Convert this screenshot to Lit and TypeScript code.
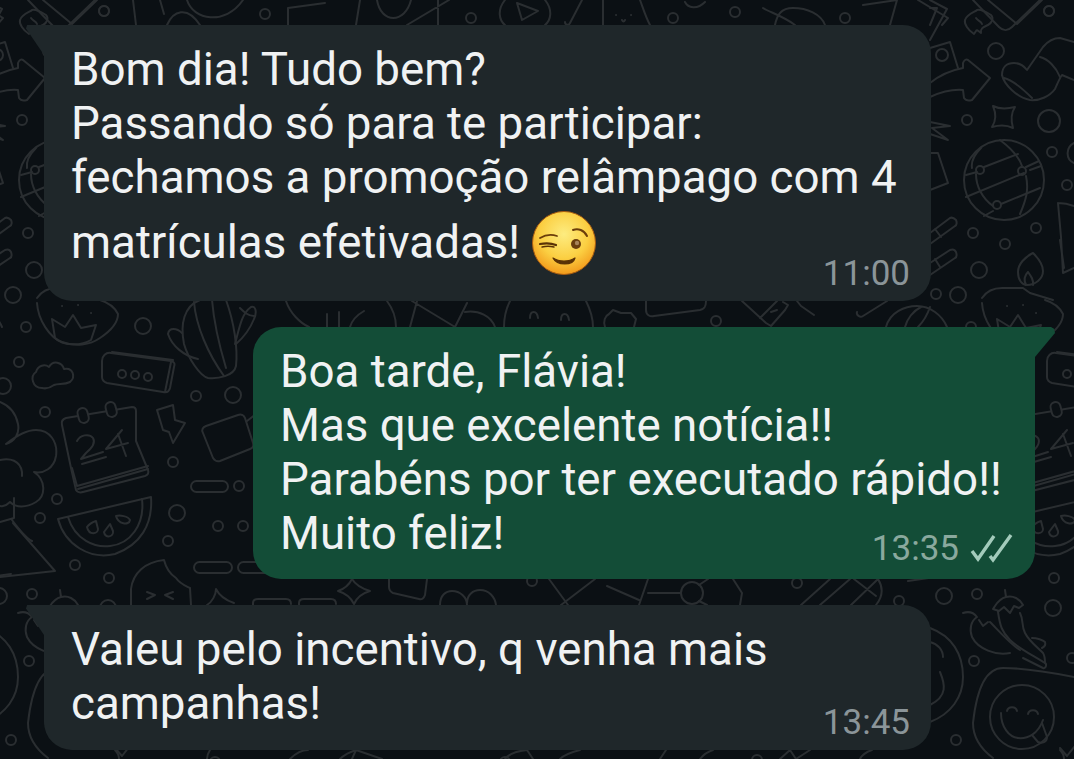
import { LitElement, html, css, svg } from "lit";
import { customElement } from "lit/decorators.js";

const rings: [number, number, number][] = [
  [104,11,5],[265,14,5],[471,18,5],[673,18,5],[735,12,5],[845,18,5],[1049,11,5],
  [996,51,8],[942,55,6],[967,120,5],[1049,121,11],[1052,152,5],[1067,185,5],[973,233,5],[1036,228,5],[1005,244,5],[979,270,8],[936,294,5],[958,295,8],
  [26,327,5],[19,362,5],[45,412,5],[143,326,8],[196,396,5],[233,395,8],[173,462,5],[239,486,5],[57,499,5],[40,518,5],[177,513,8],[218,526,5],[243,526,5],[168,541,5],[75,565,5],[109,578,5],[3,386,8],
  [716,321,5],[532,581,5],[692,593,11],[797,583,5],[899,601,5],[944,596,8],
  [977,594,5],[1053,608,8],[974,661,5],[956,740,5],[1072,658,5],
  [122,374,4],[135,375,4],[148,377,4],[980,170,4],[1022,171,4],[997,205,4],
];

function shapes() {
  return svg`
    ${rings.map(r => svg`<circle cx=${r[0]} cy=${r[1]} r=${r[2]}></circle>`)}
    <!-- top strip -->
    <path d="M43 0L72 24 97 0M133 0l3 25M160 0l4 14M167 25c6-14 20-20 33 0M187 0c6 20 38 26 56 0M288 25V8l37-5"/>
    <path d="M356 25l4-25M377 0c4 24 28 24 34 0M407 25L449 0M438 0v25"/>
    <path d="M505 0c-8 10-6 20 0 25M545 0c8 10 6 20 0 25M517 3l21 8-16 9zM565 22c0 3 4 4 5 1l12-23"/>
    <path d="M603 0v25M640 0c3 8 6 18 10 25M616 15h.1M631 15h.1M622 20c1 2 2 2 3 0M685 2c3 6 12 8 20 0"/>
    <path d="M763 8c6 4 20 8 32 17M775 25c2-10 6-17 18-17 14 0 28 6 32 17M863 5l34-5M897 0l-7 25M918 0l30 18-6 7"/>
    <!-- arrow, phone and corner -->
    <path d="M930 0L947 9 930 40M930 8h7l-7 17M930 48l20-6 8 26"/>
    <path d="M930 83c10-8 22-13 33-15l0-5c1-3 3-4 5-3l22 18-18 22c-3 1-6 1-8-2l-1-8c-12-1-22 2-33 7"/>
    <!-- flame and V -->
    <path d="M973 0l26 27c4 4 9 4 13 0l28-27"/>
    <path d="M974 34c-6-4-10-10-9-14 2-6 10-8 12-10 4-1 9 2 14 5 3 3 1 8-3 10-4 2-8 3-7 8-3-2-4-4-5-2z"/>
    <path d="M976 18c2 3 5 3 6 6"/>
    <!-- mitten -->
    <path d="M1002 75c0-8 5-12 12-12 5 0 10 3 13 7l16-23c5-6 12-9 17-9l14 4"/>
    <path d="M1002 75c2 10 16 23 28 25 10 1 20-4 25-11 2-4 4-10 7-14l12 5"/>
    <path d="M1004 78c8 2 18 10 28 20M1040 57c8 2 16 10 20 20"/>
    <!-- star -->
    <path d="M993 106c6 3 14 3 22 1-4 6-4 14-2 21-6-3-14-3-21-1 4-6 4-14 1-21z"/>
    <!-- palm -->
    <path d="M930 122l20 4-18 2 16 12-18-6M930 153h8l10 30-18 7"/>
    <!-- globe -->
    <circle cx="1004" cy="180" r="40"/>
    <path d="M981 148c-8 8-10 14-9 20M976 174c0 12 6 24 17 32M1000 140c8 6 18 14 22 26M1026 176c3 14 0 24-6 38"/>
    <path d="M966 175l11-3M984 167l34-13M1026 167l13-6M966 197l58-24M1030 170l11-4M984 216l9-5M1001 204l39-16"/>
    <!-- pills -->
    <path d="M930 233l20-15c2-1 4 0 6 2 1 2 1 5-1 6l-25 18M935 229l6 8"/>
    <path d="M930 263l20-13c3-1 5 0 6 2 1 3 1 5-1 6l-25 17M935 259l5 8"/>
    <!-- corner cell, lamp -->
    <path d="M1058 203c6 0 11 1 16 3M1058 203l3 34 2 36 11-5M1060 240l4 28"/>
    <path d="M1074 143c-8 4-9 16 0 20"/>
    <path d="M1033 253c-8 4-15 11-15 19 0 8 4 13 9 13 8 0 16-6 16-14 0-8-6-14-10-18z"/>
    <path d="M1028 272c-4 4-4 9-2 13M1028 272c3 4 6 8 5 13"/>
    <path d="M982 298c4-6 10-10 20-10h21l7 5 23 7"/>
    <!-- strawberry -->
    <path d="M37 303c1 17 13 35 25 39 13 5 28 3 38-4 12-8 18-16 18-24-3-6-8-11-18-14"/>
    <path d="M52 319l13 8 8-12 8 13 15-3-5 15c-10 6-28 6-36-2z"/>
    <path d="M62 306h.1M78 305h.1M91 313h.1"/>
    <!-- cloud -->
    <path d="M42 388c-10 0-12-12-6-16 2-7 9-8 13-5 4-7 13-5 15 2 9-2 12 8 6 13-6 3-12 1-16 3-4 3-8 4-12 3z"/>
    <!-- keypad box -->
    <path d="M102 361c0-5 4-9 9-8l60 8c4 1 4 3 3 6l-4 21c-1 4-3 5-7 4l-56-9c-3-1-5-3-5-6z"/>
    <path d="M112 352l61 8M171 362l-6 30"/>
    <!-- cactus -->
    <path d="M200 300c-16 6-20 24-16 44 4 14 16 32 24 34 10 1 26-2 28-12 2-18-2-44-10-66"/>
    <path d="M194 302c2 24 14 52 30 74M212 300c2 24 8 48 14 68"/>
    <path d="M182 333c-5-5-13-6-14 1 4 12 16 22 30 25"/>
    <path d="M235 344c4-14 6-30 16-37 5-2 6 6 3 12-4 10-10 18-18 25"/>
    <!-- lightning -->
    <path d="M157 410l16-5 2 15 10 3-12 20-4-11-6-2z"/>
    <!-- rounded square -->
    <path d="M203 433c-2-3 0-6 3-7l32-11c3-1 6 0 7 3l8 25c1 3 0 5-3 6l-30 12c-3 1-5 0-7-3z"/>
    <path d="M247 421l9-7"/>
    <!-- broccoli -->
    <path d="M6 444c8-2 14-10 12-20-2-10-8-18-18-22M6 444c10-8 20-14 30-14 14 0 22 12 20 26-2 12-12 18-22 16 12 8 12 24 2 30-10 6-20 6-26 0-4 4-10 6-14 2"/>
    <path d="M0 460c10-2 20 0 22 12v4M14 498v20l-14 4M12 520c6 8 14 18 20 21"/>
    <!-- calendar -->
    <path d="M62 425c-1-4 1-6 4-7l66-11c3 0 4 1 4 4v30l12 29c1 3 0 5-3 6l-62 16c-3 1-6 0-7-2l-5-22z"/>
    <rect x="78" y="408" width="10" height="15" rx="5" fill="#0b1014" transform="rotate(-15 83 415)"/>
    <rect x="106" y="402" width="10" height="15" rx="5" fill="#0b1014" transform="rotate(-15 111 409)"/>
    <path d="M72 468l5 18 71-20M78 489l70-20"/>
    <path d="M77 441c3-6 12-8 16-3 3 5-1 10-7 15l-5 6 22-7M82 464l24-7M122 430l-16 19 22-6M118 434l8 22"/>
    <!-- watermelon -->
    <path d="M58 519l93-22c2 28-11 48-36 57-25 6-50-9-57-35z"/>
    <path d="M68 517c7 23 27 31 42 29 20-2 35-21 32-47"/>
    <path d="M87 527c2-3 6-5 9-6l2 8c0 5-9 7-11-2zM104 532l6-8 3 7c1 6-8 8-9 1zM116 516c4-1 12 0 14 4-1 6-12 4-14-4z"/>
    <!-- triangle and pills -->
    <path d="M0 577l55-6-42-48"/>
    <rect x="191" y="481" width="37" height="11" rx="5.5"/>
    <rect x="194" y="562" width="38" height="11" rx="5.5"/>
    <rect x="238" y="562" width="40" height="11" rx="5.5"/>
    <!-- popsicle -->
    <path d="M131 605v-16c2-16 14-27 33-29 2 8 6 14 12 18 4 6 10 8 14 10l1 17"/>
    <path d="M147 592l8 3-8 4M173 592l-8 3 8 4"/>
    <path d="M207 605c5-3 9-10 9-16 3 6 9 11 18 14"/>
    <!-- gap below first bubble -->
    <path d="M240 308c4 4 8 8 14 8M286 301c4 12 14 22 23 26M327 314v13M339 312v15M350 327c2-7 7-12 14-16M387 301c6 8 9 16 9 26"/>
    <path d="M410 327l7-26M412 301l43 26M467 303l-12 24M465 312c14-2 26 4 30 15M504 327c0-10 2-18 6-26M586 301c4 8 7 16 7 26"/>
    <path d="M530 318c0-8 7-8 8 0M561 320c0-8 7-8 8 0"/>
    <path d="M605 327c-2-6 0-11 4-13l4-4 8 3 10 0 5 6-2 8"/>
    <path d="M646 301v9c0 5 4 7 8 6l46-6c5-1 6-4 6-9"/>
    <path d="M742 301l24 22 5 3 14-16 3-5-5-3M760 318l17-17M771 312l6-2M797 301l4 5 13 9M857 312c-1 3 3 6 6 4l24-15"/>
    <path d="M886 327c4-15 19-21 31-21 13 0 25 9 30 21M905 327c2-8 8-16 16-20M918 327c6-6 10-14 12-20"/>
    <!-- gap below second bubble -->
    <path d="M338 591c6-2 11-6 14-12 3 5 8 9 18 12-7 2-13 6-16 13-3-6-9-11-16-13z"/>
    <path d="M389 579v8c0 3 2 5 4 6l26 6c3 1 5-1 6-4l2-16"/>
    <path d="M253 605v-2c0-3 2-4 5-4h28c3 0 5 2 5 5M299 605v-2c0-3 2-4 5-4h27c3 0 5 2 5 5"/>
    <path d="M440 605c0-10 6-14 12-14 8 0 15 6 15 14M467 603c0-8 6-13 13-13 9 0 15 7 16 15"/>
    <path d="M549 579l19 26M561 605l34-26M607 586l32 14M639 605l9-26M648 593h33M699 585l9-6M699 601l8 4M733 579l9 14-2 12M801 605l29-26M820 605l30-26M851 605l27-26M854 579l22 17M878 579c5 8 6 16-2 26M908 581l48-7"/>
    <!-- chillies -->
    <path d="M963 613c6-2 11 0 14 4M977 617c-6 4-8 12-5 20 6 12 24 19 38 16"/>
    <path d="M990 622c8 8 20 22 30 28M979 620l4 6 5-4"/>
    <path d="M1005 590l1 7M993 609c3-4 5-10 13-12 7-2 14 2 17 8l-4 3-5-2-4 7-6-6-5 4zM998 612c2 14 4 20 12 28 8 8 24 16 35 23 2 1 1 6-2 5l-20-10"/>
    <path d="M1020 613c4 8 1 12 5 20 4 8 12 14 18 20 2 3 2 7 2 10M1032 638c5 0 11 2 13 4 1 3-1 5-3 6"/>
    <!-- egg and smile -->
    <path d="M1074 677c-20-4-50-9-71-9-16 0-26 18-30 55 0 14 8 26 20 35"/>
    <circle cx="1022" cy="717" r="32"/>
    <path d="M1001 713c0 14 8 24 17 25 10 1 20-4 25-18"/>
    <path d="M1007 711c1-5 9-5 10 0M1028 714c1-5 9-5 10 0"/>
    <path d="M1032 735l6 7c4 2 9 0 9-5l-5-14"/>
    <path d="M1060 748l7 8 7-9"/>
    <path d="M930 628c22 8 33 26 33 49 0 20-12 37-33 45M930 642c8 2 13 8 13 15M940 672c5 12 8 24-10 33"/>
    <!-- bottom strip -->
    <path d="M115 750c3 3 4 6 4 9M210 750c-2 3-3 6-3 9M290 759c6-6 12-9 18-9M340 759c4-4 10-7 16-9l-4 9M356 750l26 9M505 759c4-5 12-8 22-9l6 9M560 759c4-4 12-7 20-9M660 759l6-9M700 759c3-4 7-7 13-9M780 759l10-9 6 9 14-9M860 759c2-4 6-7 12-9"/>
    <circle cx="215" cy="762" r="5"/><circle cx="505" cy="762" r="5"/><circle cx="757" cy="760" r="5"/>
  `;
}

function Wallpaper() {
  return svg`<svg class="wall" viewBox="0 0 1074 759" width="1074" height="759" aria-hidden="true">
    <g fill="none" stroke="#2a2e31" stroke-width="2" stroke-linecap="round" stroke-linejoin="round">
      <g transform="translate(-945 0)">${shapes()}</g>
      <g>${shapes()}</g>
      <g transform="translate(945 0)">${shapes()}</g>
    </g>
  </svg>`;
}

function Wink() {
  return svg`<svg class="emoji" viewBox="0 0 64 64" width="64" height="64" role="img" aria-label="😉">
    <defs>
      <radialGradient id="face" cx="50%" cy="36%" r="64%">
        <stop offset="0" stop-color="#fdec80"/>
        <stop offset=".6" stop-color="#fbcf42"/>
        <stop offset="1" stop-color="#f29a1b"/>
      </radialGradient>
    </defs>
    <circle cx="32" cy="32" r="31.5" fill="url(#face)" stroke="#a85c10" stroke-width="1"/>
    <path d="M8 27c5-3 11-4 17-2" fill="none" stroke="#6b3d0a" stroke-width="1.8" stroke-linecap="round"/>
    <path d="M8 33c5-1 11-1 16 1" fill="none" stroke="#5a3206" stroke-width="2.2" stroke-linecap="round"/>
    <path d="M10 36c4-1 8-1 12 0" fill="none" stroke="#5a3206" stroke-width="1.3" stroke-linecap="round"/>
    <path d="M41 19c5-2 11 0 14 6" fill="none" stroke="#6b3d0a" stroke-width="2" stroke-linecap="round"/>
    <circle cx="44" cy="33" r="5" fill="#6b3f0e"/>
    <circle cx="45" cy="32" r="2.2" fill="#a8855a"/>
    <path d="M21 47c6 4 16 4 22 0-2 8-18 8-22 0z" fill="#5a3206" stroke="#5a3206" stroke-width="1.2" stroke-linejoin="round"/>
  </svg>`;
}

@customElement("app-root")
export class AppRoot extends LitElement {
  static styles = css`
    :host {
      display: block;
      width: 1074px;
      height: 759px;
      overflow: hidden;
      position: relative;
      background: #0b1014;
      font-family: Roboto, "Liberation Sans", sans-serif;
    }
    .wall { position: absolute; inset: 0; }
    .thread {
      position: relative;
      display: flex;
      flex-direction: column;
      gap: 26px;
      padding-top: 25px;
    }
    .bubble {
      position: relative;
      display: grid;
      box-sizing: border-box;
      color: #f0f2f3;
      font-size: 45.7px;
      line-height: 54px;
      padding: 0 22px 0 27px;
    }
    .text, .meta { grid-area: 1 / 1; }
    .in {
      width: 887px;
      margin-left: 44px;
      padding-right: 21px;
      background: #1f272a;
      border-radius: 0 28px 28px 28px;
    }
    .out {
      width: 782px;
      margin-left: 253px;
      background: #134d37;
      border-radius: 28px 0 28px 28px;
    }
    .tail { position: absolute; top: 0; }
    .in .tail {
      right: 100%;
      width: 18px;
      height: 30px;
      background: #1f272a;
      clip-path: polygon(6% 0, 100% 0, 100% 100%, 0 12%);
    }
    .out .tail {
      left: 100%;
      width: 20px;
      height: 30px;
      background: #134d37;
      clip-path: polygon(0 0, 80% 0, 95% 6%, 100% 20%, 0 100%);
    }
    .text { white-space: nowrap; padding-top: 18px; }
    .first .text { padding-bottom: 26px; }
    .second .text { padding-bottom: 18px; }
    .third .text { padding-bottom: 19px; }
    .line { display: block; }
    .emoji-line { padding-top: 6px; }
    .emoji { vertical-align: -17px; margin-left: 1px; }
    .meta {
      justify-self: end;
      align-self: end;
      display: flex;
      align-items: center;
      gap: 12px;
      font-size: 35px;
      line-height: 40px;
      margin-bottom: 7px;
      color: #8b9599;
    }
    .second .meta { color: #8aa99e; margin-bottom: 10px; }
    .checks { display: block; overflow: visible; }
  `;

  render() {
    return html`
      ${Wallpaper()}
      <div class="thread">
        <div class="bubble in first">
          <span class="tail"></span>
          <div class="text">
            <span class="line">Bom dia! Tudo bem?</span>
            <span class="line">Passando só para te participar:</span>
            <span class="line">fechamos a promoção relâmpago com 4</span>
            <span class="line emoji-line">matrículas efetivadas! ${Wink()}</span>
          </div>
          <div class="meta">11:00</div>
        </div>
        <div class="bubble out second">
          <span class="tail"></span>
          <div class="text">
            <span class="line">Boa tarde, Flávia!</span>
            <span class="line">Mas que excelente notícia!!</span>
            <span class="line">Parabéns por ter executado rápido!!</span>
            <span class="line">Muito feliz!</span>
          </div>
          <div class="meta">
            <span>13:35</span>
            <svg class="checks" viewBox="0 0 42 30" width="42" height="30" fill="none" stroke="#a3cbbb" stroke-width="3.4">
              <path d="M1 17l6 8L23 2"/>
              <path d="M19 22l3 4L40 1"/>
            </svg>
          </div>
        </div>
        <div class="bubble in third">
          <span class="tail"></span>
          <div class="text">
            <span class="line">Valeu pelo incentivo, q venha mais</span>
            <span class="line">campanhas!</span>
          </div>
          <div class="meta">13:45</div>
        </div>
      </div>
    `;
  }
}
